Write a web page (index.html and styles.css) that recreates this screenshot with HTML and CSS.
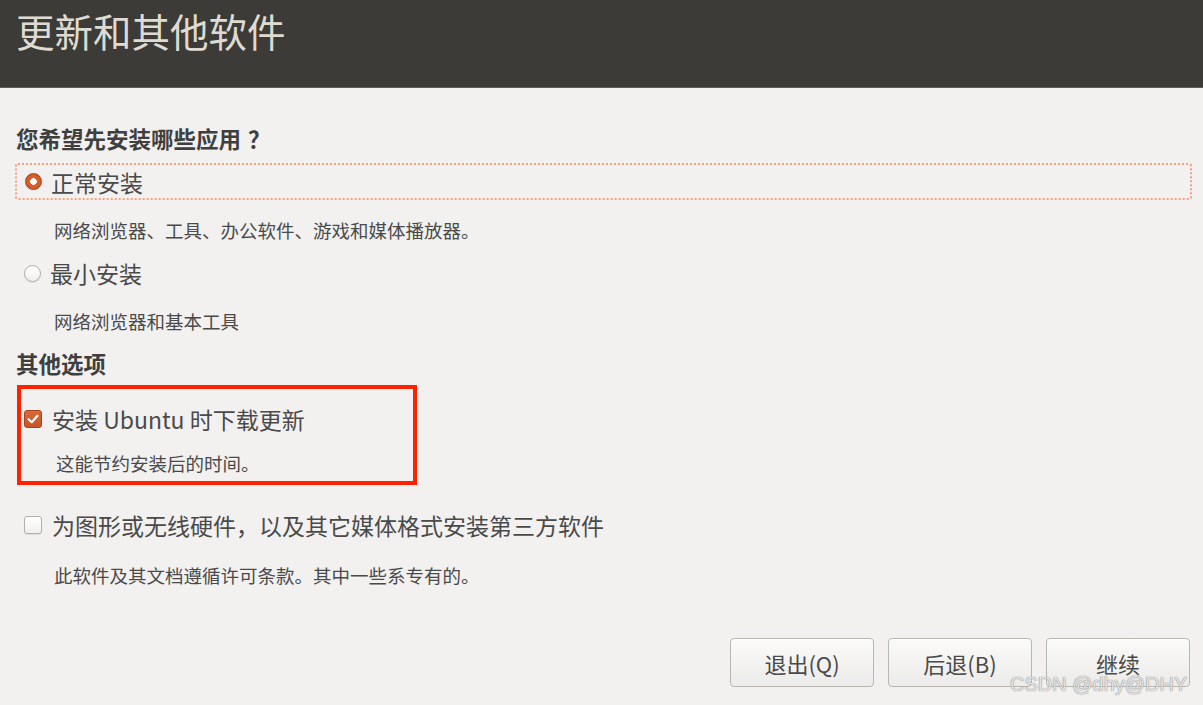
FILE: index.html
```html
<!DOCTYPE html>
<html lang="zh-CN">
<head>
<meta charset="utf-8">
<title>更新和其他软件</title>
<link rel="stylesheet" href="styles.css">
</head>
<body>
<div class="window">
  <header class="titlebar">
    <h1 class="title">更新和其他软件</h1>
  </header>
  <main class="content">
    <h2 class="section-title">您希望先安装哪些应用<span class="qmark">？</span></h2>
    <div class="option focus">
      <span class="radio checked"></span>
      <span class="label">正常安装</span>
    </div>
    <p class="desc d1">网络浏览器、工具、办公软件、游戏和媒体播放器。</p>
    <div class="option plain r2">
      <span class="radio"></span>
      <span class="label">最小安装</span>
    </div>
    <p class="desc d2">网络浏览器和基本工具</p>
    <h2 class="section-title s2">其他选项</h2>
    <div class="highlight">
      <div class="option check-row">
        <span class="check checked">
          <svg viewBox="0 0 18 18" width="18" height="18"><path d="M4 9.2 L7.6 12.6 L14 5.4" fill="none" stroke="#fff" stroke-width="2.4" stroke-linecap="round" stroke-linejoin="round"/></svg>
        </span>
        <span class="label">安装 Ubuntu 时下载更新</span>
      </div>
      <p class="desc d3">这能节约安装后的时间。</p>
    </div>
    <div class="option check-row c2">
      <span class="check"></span>
      <span class="label">为图形或无线硬件，以及其它媒体格式安装第三方软件</span>
    </div>
    <p class="desc d4">此软件及其文档遵循许可条款。其中一些系专有的。</p>
    <div class="buttons">
      <button class="btn">退出(Q)</button>
      <button class="btn">后退(B)</button>
      <button class="btn">继续</button>
    </div>
  </main>
  <div class="watermark">CSDN @dhy@DHY</div>
</div>
</body>
</html>
```
FILE: styles.css
```css
html, body {
  margin: 0;
  padding: 0;
}
body {
  width: 1203px;
  height: 705px;
  overflow: hidden;
  background: #f2f1f0;
  font-family: "Noto Sans CJK SC", "Noto Sans", sans-serif;
  color: #4c4c4c;
}
.window {
  position: relative;
  width: 1203px;
  height: 705px;
}
.titlebar {
  height: 87px;
  background: #3c3b37;
  border-bottom: 1px solid #5e5c57;
  box-sizing: content-box;
}
.title {
  margin: 0;
  padding: 6px 0 0 16px;
  font-size: 38.5px;
  line-height: 48px;
  font-weight: 400;
  color: #dfdbd2;
}
.content {
  display: flex;
  flex-direction: column;
  padding: 38px 13px 0 15px;
}
.section-title {
  margin: 0;
  font-size: 22.5px;
  line-height: 24px;
  font-weight: 700;
  color: #3f3f3f;
  padding-left: 1px;
}
.qmark {
  display: inline-block;
  padding-left: 7px;
}
.s2 { margin-top: 19px; }
.option {
  display: flex;
  align-items: center;
  gap: 9px;
  height: 30px;
}
.option .label {
  font-size: 23px;
  line-height: 30px;
  color: #4a4a4a;
}
.focus {
  margin-top: 13px;
  margin-right: -2px;
  height: 33px;
  border: 2px dotted #f4a282;
  border-radius: 3px;
  padding-left: 8px;
}
.plain { padding-left: 9px; }
.r2 { margin-top: 17px; }
.radio {
  width: 17px;
  height: 17px;
  border-radius: 50%;
  box-sizing: border-box;
  border: 1px solid #aeaaa4;
  background: linear-gradient(#ffffff, #f1f0ee);
  box-shadow: 0 1px 1px rgba(0,0,0,0.08);
  flex: none;
}
.radio.checked {
  border: 1px solid #a9431b;
  background: radial-gradient(circle, #ffffff 0 3px, #d9622f 3.6px, #c85020 100%);
}
.desc {
  margin: 0;
  padding-left: 39px;
  font-size: 18.5px;
  line-height: 22px;
  color: #4a4a4a;
}
.d1 { margin-top: 19px; }
.d2 { margin-top: 22px; }
.highlight {
  margin-top: 10px;
  margin-left: 2px;
  width: 389px;
  border: 4px solid #ff2200;
  padding: 15px 0 0 3px;
  box-sizing: content-box;
  height: 77px;
}
.check-row { gap: 10px; }
.check {
  width: 18px;
  height: 18px;
  box-sizing: border-box;
  border-radius: 3px;
  border: 1px solid #b3afa9;
  background: linear-gradient(#ffffff, #f1f0ee);
  box-shadow: 0 1px 1px rgba(0,0,0,0.08);
  display: flex;
  align-items: center;
  justify-content: center;
  flex: none;
}
.check.checked {
  border: 1px solid #a9431b;
  background: linear-gradient(#d86a3b, #c55526);
  box-shadow: none;
}
.check svg { display: block; }
.d3 { margin-top: 18px; padding-left: 32px; }
.c2 { margin-top: 25px; padding-left: 9px; }
.d4 { margin-top: 24px; }
.buttons {
  margin-top: 52px;
  display: flex;
  justify-content: flex-end;
  gap: 14px;
}
.btn {
  width: 144px;
  height: 49px;
  border: 1px solid #bab6b0;
  border-radius: 4px;
  background: linear-gradient(#fbfbfa, #ecebe9);
  box-shadow: inset 0 1px 0 #ffffff;
  font-family: "Noto Sans CJK SC", "Noto Sans", sans-serif;
  font-size: 22px;
  color: #4a4a4a;
  padding: 0;
}
.watermark {
  position: absolute;
  left: 1010px;
  top: 672px;
  font-family: "Liberation Sans", Arial, sans-serif;
  font-size: 20px;
  line-height: 24px;
  color: rgba(255,255,255,0.75);
  text-shadow: 0 0 1px #8a8a8a, 0 0 1px #8a8a8a;
  white-space: nowrap;
}
```
